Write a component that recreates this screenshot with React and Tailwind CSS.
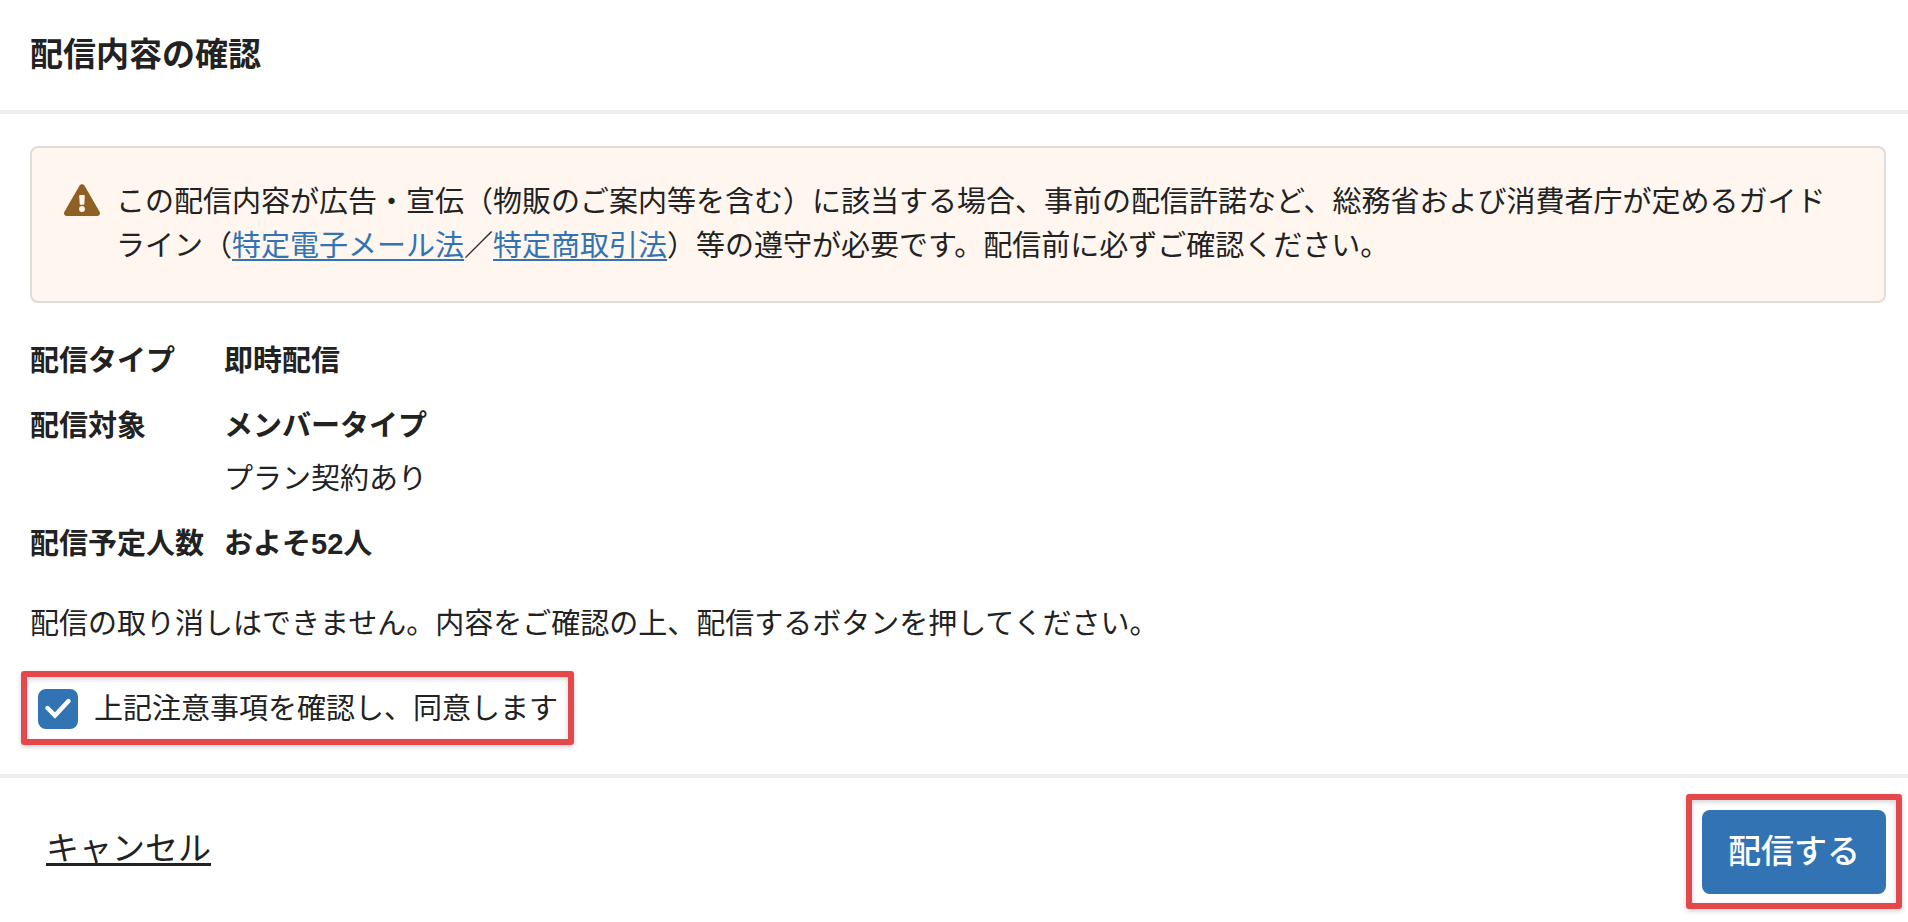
import React, { useState } from "react";

const WarningIcon = () => (
  <svg
    viewBox="0 0 36 32"
    className="w-9 h-8 shrink-0 mt-1"
    aria-hidden="true"
  >
    <path
      fill="#8f6024"
      d="M15.6 1.6a2.8 2.8 0 0 1 4.8 0l15.2 26.2c1.1 1.9-.2 4.2-2.4 4.2H2.8C.6 32-.7 29.7.4 27.8z"
    />
    <path
      fill="#fff6f0"
      d="M15.9 11h4.2c.4 0 .7.3.7.7l-.5 8.4c0 .4-.3.7-.7.7h-3.2c-.4 0-.7-.3-.7-.7l-.5-8.4c0-.4.3-.7.7-.7z"
    />
    <circle cx="18" cy="25" r="2.9" fill="#fff6f0" />
  </svg>
);

// Red frame that draws attention to the control inside it
const Highlight = ({ className, children }) => (
  <div className={`relative ${className}`}>
    <span className="absolute inset-0 rounded-[3px] border-6 border-[#e5484b] shadow-[0_2px_5px_rgba(0,0,0,0.18),inset_0_2px_5px_rgba(0,0,0,0.18)] pointer-events-none"></span>
    {children}
  </div>
);

const App = () => {
  const [agreed, setAgreed] = useState(true);

  const details = [
    { label: "配信タイプ", value: "即時配信" },
    { label: "配信対象", value: "メンバータイプ", note: "プラン契約あり" },
    { label: "配信予定人数", value: "およそ52人" },
  ];

  return (
    <div
      lang="ja"
      className="bg-white text-[#222222] text-[29px] leading-11 font-['Liberation_Sans','Noto_Sans_CJK_JP',sans-serif]"
    >
      {/* Header */}
      <header className="border-b-4 border-[#ededed] px-[30px] py-[33px]">
        <h1 className="text-[33px] font-bold">配信内容の確認</h1>
      </header>

      <main className="pt-8 pr-[22px] pb-[29px] pl-[30px]">
        {/* Notice */}
        <div className="flex gap-4 rounded-lg border-2 border-[#e2dcd6] bg-[#fff6f0] px-8 pt-8 pb-[33px]">
          <WarningIcon />
          <p>
            この配信内容が広告・宣伝（物販のご案内等を含む）に該当する場合、事前の配信許諾など、総務省および消費者庁が定めるガイドライン（
            <a
              href="#"
              className="text-[#3274b3] underline decoration-2 underline-offset-3"
            >
              特定電子メール法
            </a>
            ／
            <a
              href="#"
              className="text-[#3274b3] underline decoration-2 underline-offset-3"
            >
              特定商取引法
            </a>
            ）等の遵守が必要です。配信前に必ずご確認ください。
          </p>
        </div>

        {/* Delivery details */}
        <dl className="mt-9 flex flex-col gap-[21px]">
          {details.map((item) => (
            <div key={item.label} className="flex">
              <dt className="w-[194px] shrink-0 font-bold">{item.label}</dt>
              <dd>
                <p className="font-bold">{item.value}</p>
                {item.note && <p className="mt-[9px]">{item.note}</p>}
              </dd>
            </div>
          ))}
        </dl>

        <p className="mt-9">
          配信の取り消しはできません。内容をご確認の上、配信するボタンを押してください。
        </p>

        <Highlight className="mt-[25px] -ml-[9px] w-fit pt-4 pb-[14px] pl-[17px] pr-4">
          <label className="flex items-center gap-4 cursor-pointer">
            <span className="relative flex size-10">
              <input
                type="checkbox"
                checked={agreed}
                onChange={(e) => setAgreed(e.target.checked)}
                className="size-10 appearance-none rounded-lg border-2 border-[#3274b3] bg-white checked:bg-[#3274b3]"
              />
              {agreed && (
                <svg
                  viewBox="0 0 40 40"
                  className="absolute inset-0 size-10 pointer-events-none"
                  aria-hidden="true"
                >
                  <path
                    d="M9.5 19l7.5 7.5L30.5 12"
                    fill="none"
                    stroke="#fff"
                    strokeWidth="4.4"
                    strokeLinecap="round"
                  />
                </svg>
              )}
            </span>
            上記注意事項を確認し、同意します
          </label>
        </Highlight>
      </main>

      {/* Footer */}
      <footer className="flex items-start justify-between border-t-4 border-[#ededed] pt-4 pr-1.5 pb-3 pl-[46px] text-[33px]">
        <button
          type="button"
          className="mt-[33px] cursor-pointer underline decoration-3 underline-offset-3"
        >
          キャンセル
        </button>
        <Highlight className="px-4 pt-4 pb-[15px]">
          <button
            type="button"
            className="block h-[84px] cursor-pointer rounded-lg bg-[#3274b3] px-[26px] font-medium text-white"
          >
            配信する
          </button>
        </Highlight>
      </footer>
    </div>
  );
};

export default App;
